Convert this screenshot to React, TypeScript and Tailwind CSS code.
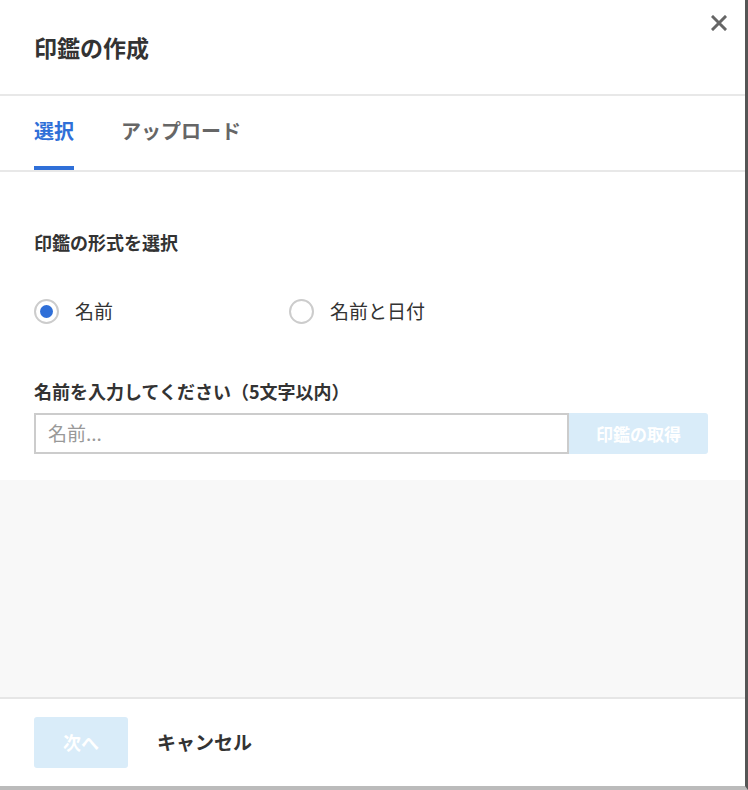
export default function App() {
  const font = { fontFamily: '"Noto Sans CJK JP", "Noto Sans", sans-serif' };
  return (
    <div style={font} className="w-[748px] h-[790px] flex flex-col bg-white text-[#333] border-r-[3px] border-r-[#555] border-b-[4px] border-b-[#bbb]">
      <div className="relative h-[94px] shrink-0 flex items-center px-[34px]">
        <h1 className="text-[23px] font-bold text-[#333]">印鑑の作成</h1>
        <svg className="absolute right-[18px] top-[15px]" width="16" height="16" viewBox="0 0 16 16">
          <path d="M2 2 L14 14 M14 2 L2 14" stroke="#666" strokeWidth="3" strokeLinecap="square" />
        </svg>
      </div>
      <div className="border-t-2 border-[#e8e8e8] h-[78px] shrink-0 flex items-end px-[34px] gap-[47px] border-b-2 border-b-[#e8e8e8]">
        <div className="h-full flex flex-col justify-center relative">
          <span className="text-[20px] font-bold text-[#2f6fd8] mt-[-4px]">選択</span>
          <div className="absolute bottom-0 left-0 right-0 h-[4px] bg-[#2f6fd8]" />
        </div>
        <div className="h-full flex flex-col justify-center">
          <span className="text-[20px] font-bold text-[#666] mt-[-4px]">アップロード</span>
        </div>
      </div>
      <div className="px-[34px] pt-[57px] pb-[26px]">
        <div className="text-[18px] font-bold">印鑑の形式を選択</div>
        <div className="flex items-center mt-[40px] h-[30px]">
          <label className="flex items-center gap-[16px] w-[255px]">
            <span className="w-[25px] h-[25px] rounded-full border-2 border-[#ccc] flex items-center justify-center">
              <span className="w-[13px] h-[13px] rounded-full bg-[#2f6fd8]" />
            </span>
            <span className="text-[19px]">名前</span>
          </label>
          <label className="flex items-center gap-[16px]">
            <span className="w-[25px] h-[25px] rounded-full border-2 border-[#ccc]" />
            <span className="text-[19px]">名前と日付</span>
          </label>
        </div>
        <div className="text-[18px] font-bold mt-[52px]">名前を入力してください（5文字以内）</div>
        <div className="flex mt-[8px] h-[41px] w-[674px]">
          <input placeholder="名前..." className="flex-1 border-2 border-[#ccc] px-[12px] text-[19px] placeholder:text-[#999] outline-none" style={font} />
          <button className="w-[139px] bg-[#d9ecf9] text-white font-bold text-[17px] rounded-r-[3px]">印鑑の取得</button>
        </div>
      </div>
      <div className="flex-1 bg-[#f8f8f8] border-b-2 border-[#e6e6e6]" />
      <div className="h-[87px] shrink-0 flex items-center px-[34px] gap-[29px]">
        <button className="w-[94px] h-[51px] bg-[#d9ecf9] text-white font-bold text-[18px] rounded-[3px]">次へ</button>
        <button className="text-[19px] font-bold text-[#333]">キャンセル</button>
      </div>
    </div>
  );
}
